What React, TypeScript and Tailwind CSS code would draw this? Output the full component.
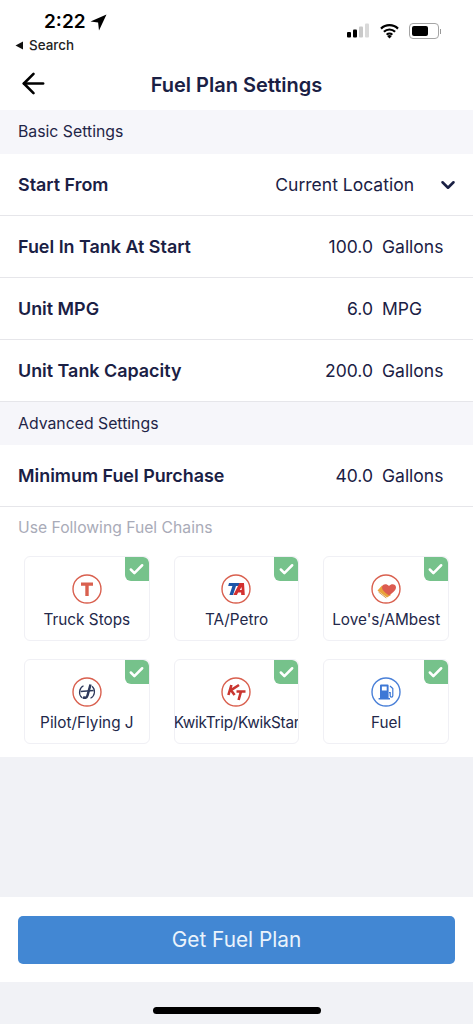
import { ArrowLeft, ChevronDown, Check } from "lucide-react";
import type { ReactNode } from "react";

function Band({ children, short }: { children: ReactNode; short?: boolean }) {
  return (
    <div className={`flex items-center bg-[#f6f6fa] px-[18px] text-[15.8px] font-normal text-[#1f2547] ${short ? "h-[43px]" : "h-[44px]"}`}>
      {children}
    </div>
  );
}

function Row({ label, value, unit }: { label: string; value: string; unit: string }) {
  return (
    <div className="flex h-[62px] items-center border-b border-[#e6e6ea] pl-[18px] text-[#1a2044]">
      <div className="flex-1 pt-px text-[17.9px] font-semibold">{label}</div>
      <div className="pt-px text-right text-[17.5px]">{value}</div>
      <div className="ml-[9px] w-[91px] pt-px text-[17.5px]">{unit}</div>
    </div>
  );
}

function Ring({ color, children }: { color: string; children: ReactNode }) {
  return (
    <svg width="30" height="30" viewBox="0 0 30 30" className="block">
      <circle cx="15" cy="15" r="14" fill="#fff" stroke={color} strokeWidth="1.4" />
      {children}
    </svg>
  );
}

function Card({ label, icon, labelClass }: { label: string; icon: ReactNode; labelClass?: string }) {
  return (
    <div className="relative flex h-[85px] flex-col items-center overflow-hidden rounded-[6px] border border-[#f0f0f5] bg-white pt-[17px]">
      <div className="absolute right-0 top-0 flex h-[24px] w-[24px] items-center justify-center rounded-bl-[6px] rounded-tr-[6px] bg-[#76c28b]">
        <Check size={17} strokeWidth={3.6} className="text-white" />
      </div>
      {icon}
      <div className={`mt-[4px] flex w-full justify-center whitespace-nowrap text-[15.3px] leading-[24px] text-[#23284a] ${labelClass ?? ""}`}>
        {label}
      </div>
    </div>
  );
}

const red = "#d9604f";

const chains: { label: string; icon: ReactNode; labelClass?: string }[] = [
  {
    label: "Truck Stops",
    icon: (
      <Ring color={red}>
        <path d="M9 8.5h12v3.2h-4.3V22h-3.4V11.7H9z" fill={red} />
      </Ring>
    ),
  },
  {
    label: "TA/Petro",
    icon: (
      <Ring color={red}>
        <path d="M8 9h11l-.8 3H15l-3 9H8.4l3-9H7.2z" fill="#1d56a8" />
        <path fillRule="evenodd" d="M18.5 9H23l.8 12h-3.6l-.1-2.4h-3L15.9 21h-3.6zM20.6 13l-1.8 3h1.9z" fill="#d3302f" />
      </Ring>
    ),
  },
  {
    label: "Love's/AMbest",
    icon: (
      <Ring color={red}>
        <path d="M6.5 16.5l4.5-5 9 9.5-4 2.5z" fill="#e9a23b" />
        <path d="M7.5 18l7.8 6" fill="none" stroke="#c9822a" strokeWidth="0.8" />
        <path d="M18 21.5c-3-2.2-7-4.8-7-8.2 0-3.2 4.4-4.4 7-1.4 2.6-3 7-1.8 7 1.4 0 3.4-4 6-7 8.2z" fill="#dc5b50" />
      </Ring>
    ),
  },
  {
    label: "Pilot/Flying J",
    icon: (
      <Ring color={red}>
        <path d="M11.5 8.8a7.3 7.3 0 0 0-1.5 12M18.5 21.2a7.3 7.3 0 0 0 1.5-12" fill="none" stroke="#2f3a5c" strokeWidth="1.2" />
        <path d="M8.5 14.6l13-1.2" fill="none" stroke="#2f3a5c" strokeWidth="1.5" />
        <path d="M18.5 7.5l-3 11c-.7 2.5-3 3-4.5 1.5" fill="none" stroke="#2f3a5c" strokeWidth="2.5" />
      </Ring>
    ),
  },
  {
    label: "KwikTrip/KwikStar",
    labelClass: "tracking-[-0.25px]",
    icon: (
      <Ring color={red}>
        <path d="M10.4 8l-3 10M18 8l-8 5.2 3.6 4.8M15.5 14.5h9M20 14.5L17.6 23" fill="none" stroke="#c9352f" strokeWidth="2.6" />
      </Ring>
    ),
  },
  {
    label: "Fuel",
    icon: (
      <svg width="30" height="30" viewBox="0 0 30 30" className="block">
        <circle cx="15" cy="15" r="14" fill="#fff" stroke="#4a80d8" strokeWidth="1.4" />
        <path d="M9 8.6A1 1 0 0 1 10 7.6h6.6a1 1 0 0 1 1 1V21H19v1.4H7.6V21H9zm1.9 1v4h4.8v-4z" fill="#3d78d6" />
        <path d="M19 9l2.8 2.6v7.2a1.3 1.3 0 0 1-2.6 0v-3.2h-1.2" fill="none" stroke="#3d78d6" strokeWidth="1.2" />
      </svg>
    ),
  },
];

export default function App() {
  return (
    <div className="flex h-[1024px] w-[473px] flex-col overflow-hidden bg-[#f1f2f6] font-['Inter','Liberation_Sans',sans-serif]">
      <div className="bg-white">
        {/* Status bar */}
        <div className="flex h-[60px] justify-between text-black">
          <div className="pl-[15px] pt-[8px]">
            <div className="flex items-center pl-[29px]">
              <span className="text-[19px] font-semibold leading-[28px]">2:22</span>
              <svg width="17" height="17" viewBox="0 0 17 17" className="ml-[4px]">
                <path d="M16.5.5L.5 7.6l7.6.9.9 8z" fill="#000" />
              </svg>
            </div>
            <div className="flex items-center gap-[5px] pt-px text-[13.4px] font-medium leading-[17px] text-[#222]">
              <svg width="9" height="9" viewBox="0 0 9 9">
                <path d="M8 .5v8L.5 4.5z" fill="#111" />
              </svg>
              Search
            </div>
          </div>
          <div className="flex items-start gap-[9px] pr-[32px] pt-[23px]">
            <svg width="23" height="15" viewBox="0 0 23 15">
              <rect x="0" y="9" width="4" height="5.5" rx="1" fill="#000" />
              <rect x="6" y="6.5" width="4" height="8" rx="1" fill="#000" />
              <rect x="12" y="3.5" width="4" height="11" rx="1" fill="#c9c9c9" />
              <rect x="18" y="0.5" width="4" height="14" rx="1" fill="#d9d9d9" />
            </svg>
            <svg width="21" height="16" viewBox="0 0 20 16">
              <path d="M1.5 5.6a12.2 12.2 0 0 1 17 0M4.4 8.8a8 8 0 0 1 11.2 0M7.2 11.8a4 4 0 0 1 5.6 0" fill="none" stroke="#000" strokeWidth="2.2" />
              <path d="M10 15.6l-2.2-2.4a3 3 0 0 1 4.4 0z" fill="#000" />
            </svg>
            <div className="flex items-center">
              <div className="flex h-[16px] w-[30px] items-center rounded-[4px] border border-[#a5a5a5] p-[2px]">
                <div className="h-full w-[16px] rounded-[2px] bg-black" />
              </div>
              <div className="ml-[1px] h-[5px] w-[1px] bg-[#999]" />
            </div>
          </div>
        </div>

        {/* Title bar */}
        <div className="relative flex h-[50px] items-center justify-center">
          <ArrowLeft size={33} strokeWidth={1.9} className="absolute left-[17px] top-[7px] text-black" />
          <div className="text-[20px] font-semibold text-[#1a2044]">Fuel Plan Settings</div>
        </div>
      </div>

      <Band>Basic Settings</Band>

      <div className="bg-white">
        <div className="flex h-[62px] items-center border-b border-[#e6e6ea] pl-[18px] pr-[14px] text-[#1a2044]">
          <div className="flex-1 pt-px text-[17.9px] font-semibold">Start From</div>
          <div className="pt-px text-[17.5px]">Current Location</div>
          <ChevronDown size={22} strokeWidth={2.8} className="ml-[23px] text-[#1a2044]" />
        </div>
        <Row label="Fuel In Tank At Start" value="100.0" unit="Gallons" />
        <Row label="Unit MPG" value="6.0" unit="MPG" />
        <Row label="Unit Tank Capacity" value="200.0" unit="Gallons" />
      </div>

      <Band short>Advanced Settings</Band>

      <div className="bg-white">
        <Row label="Minimum Fuel Purchase" value="40.0" unit="Gallons" />
        <div className="px-[18px] pt-[11px] text-[15.7px] font-normal leading-[20px] text-[#a9abb8]">
          Use Following Fuel Chains
        </div>
        <div className="grid grid-cols-3 gap-x-[24px] gap-y-[18px] px-[24px] pb-[13px] pt-[18px]">
          {chains.map((c) => (
            <Card key={c.label} label={c.label} icon={c.icon} labelClass={c.labelClass} />
          ))}
        </div>
      </div>

      <div className="flex-1" />

      <div className="bg-white px-[18px] pb-[18px] pt-[19px]">
        <button className="flex h-[48px] w-full items-center justify-center rounded-[5px] bg-[#4287d3] text-[20.8px] text-[#eaf3fc]">
          Get Fuel Plan
        </button>
      </div>

      <div className="flex h-[42px] justify-center pt-[25px]">
        <div className="h-[7px] w-[168px] rounded-full bg-black" />
      </div>
    </div>
  );
}
